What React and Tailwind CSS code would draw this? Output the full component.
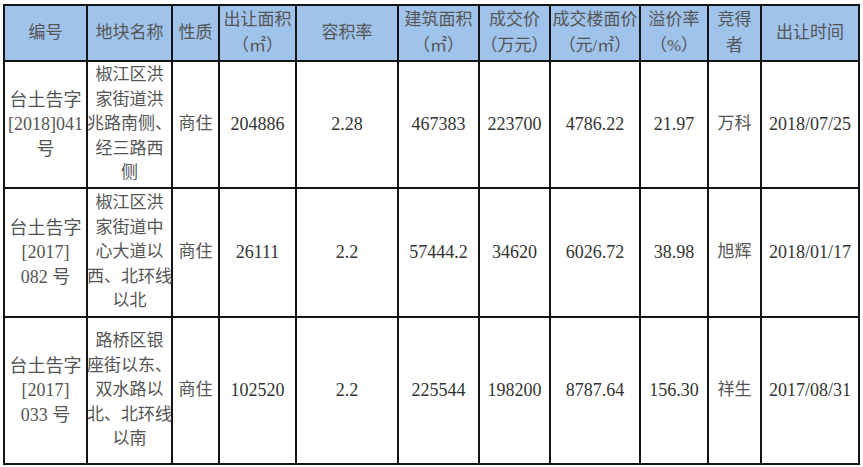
import React from 'react';

const cols = [83, 85, 47, 77, 102, 81, 71, 90, 68, 53, 98];

const header = [
  ['编号'],
  ['地块名称'],
  ['性质'],
  ['出让面积', '（㎡）'],
  ['容积率'],
  ['建筑面积', '（㎡）'],
  ['成交价', '（万元）'],
  ['成交楼面价', '（元/㎡）'],
  ['溢价率', '（%）'],
  ['竞得', '者'],
  ['出让时间'],
];

const rows = [
  {
    h: 'h-[127px]',
    cells: [
      ['台土告字', '[2018]041', '号'],
      ['椒江区洪', '家街道洪', '兆路南侧、', '经三路西', '侧'],
      ['商住'],
      ['204886'],
      ['2.28'],
      ['467383'],
      ['223700'],
      ['4786.22'],
      ['21.97'],
      ['万科'],
      ['2018/07/25'],
    ],
  },
  {
    h: 'h-[129px]',
    cells: [
      ['台土告字', '[2017]', '082 号'],
      ['椒江区洪', '家街道中', '心大道以', '西、北环线', '以北'],
      ['商住'],
      ['26111'],
      ['2.2'],
      ['57444.2'],
      ['34620'],
      ['6026.72'],
      ['38.98'],
      ['旭辉'],
      ['2018/01/17'],
    ],
  },
  {
    h: 'h-[147px]',
    cells: [
      ['台土告字', '[2017]', '033 号'],
      ['路桥区银', '座街以东、', '双水路以', '北、北环线', '以南'],
      ['商住'],
      ['102520'],
      ['2.2'],
      ['225544'],
      ['198200'],
      ['8787.64'],
      ['156.30'],
      ['祥生'],
      ['2017/08/31'],
    ],
  },
];

const Lines = ({ lines, leading }) => (
  <div className={`flex flex-col items-center whitespace-nowrap ${leading}`}>
    {lines.map((l, i) => (
      <span key={i}>{l}</span>
    ))}
  </div>
);

export default function App() {
  return (
    <div className="w-[863px] h-[467px] bg-white pt-[4px] pl-[3px] font-['Liberation_Serif','Noto_Sans_CJK_SC',serif] text-[17px] text-[#555555]">
      <table className="table-fixed border-collapse w-[855px]">
        <colgroup>
          {cols.map((w, i) => (
            <col key={i} style={{ width: w }} />
          ))}
        </colgroup>
        <thead>
          <tr className="h-[56px] bg-[#9fc3ea]">
            {header.map((lines, i) => (
              <th key={i} className="border-2 border-[#141414] p-0 font-normal align-middle">
                <Lines lines={lines} leading="leading-[26px]" />
              </th>
            ))}
          </tr>
        </thead>
        <tbody>
          {rows.map((r, ri) => (
            <tr key={ri} className={r.h}>
              {r.cells.map((lines, i) => (
                <td
                  key={i}
                  className={`border-2 border-[#141414] p-0 align-middle ${
                    i >= 3 && i !== 9 ? 'text-[18px] text-[#333333]' : i === 0 ? 'text-[18px]' : ''
                  }`}
                >
                  <Lines lines={lines} leading="leading-[24.5px]" />
                </td>
              ))}
            </tr>
          ))}
        </tbody>
      </table>
    </div>
  );
}
